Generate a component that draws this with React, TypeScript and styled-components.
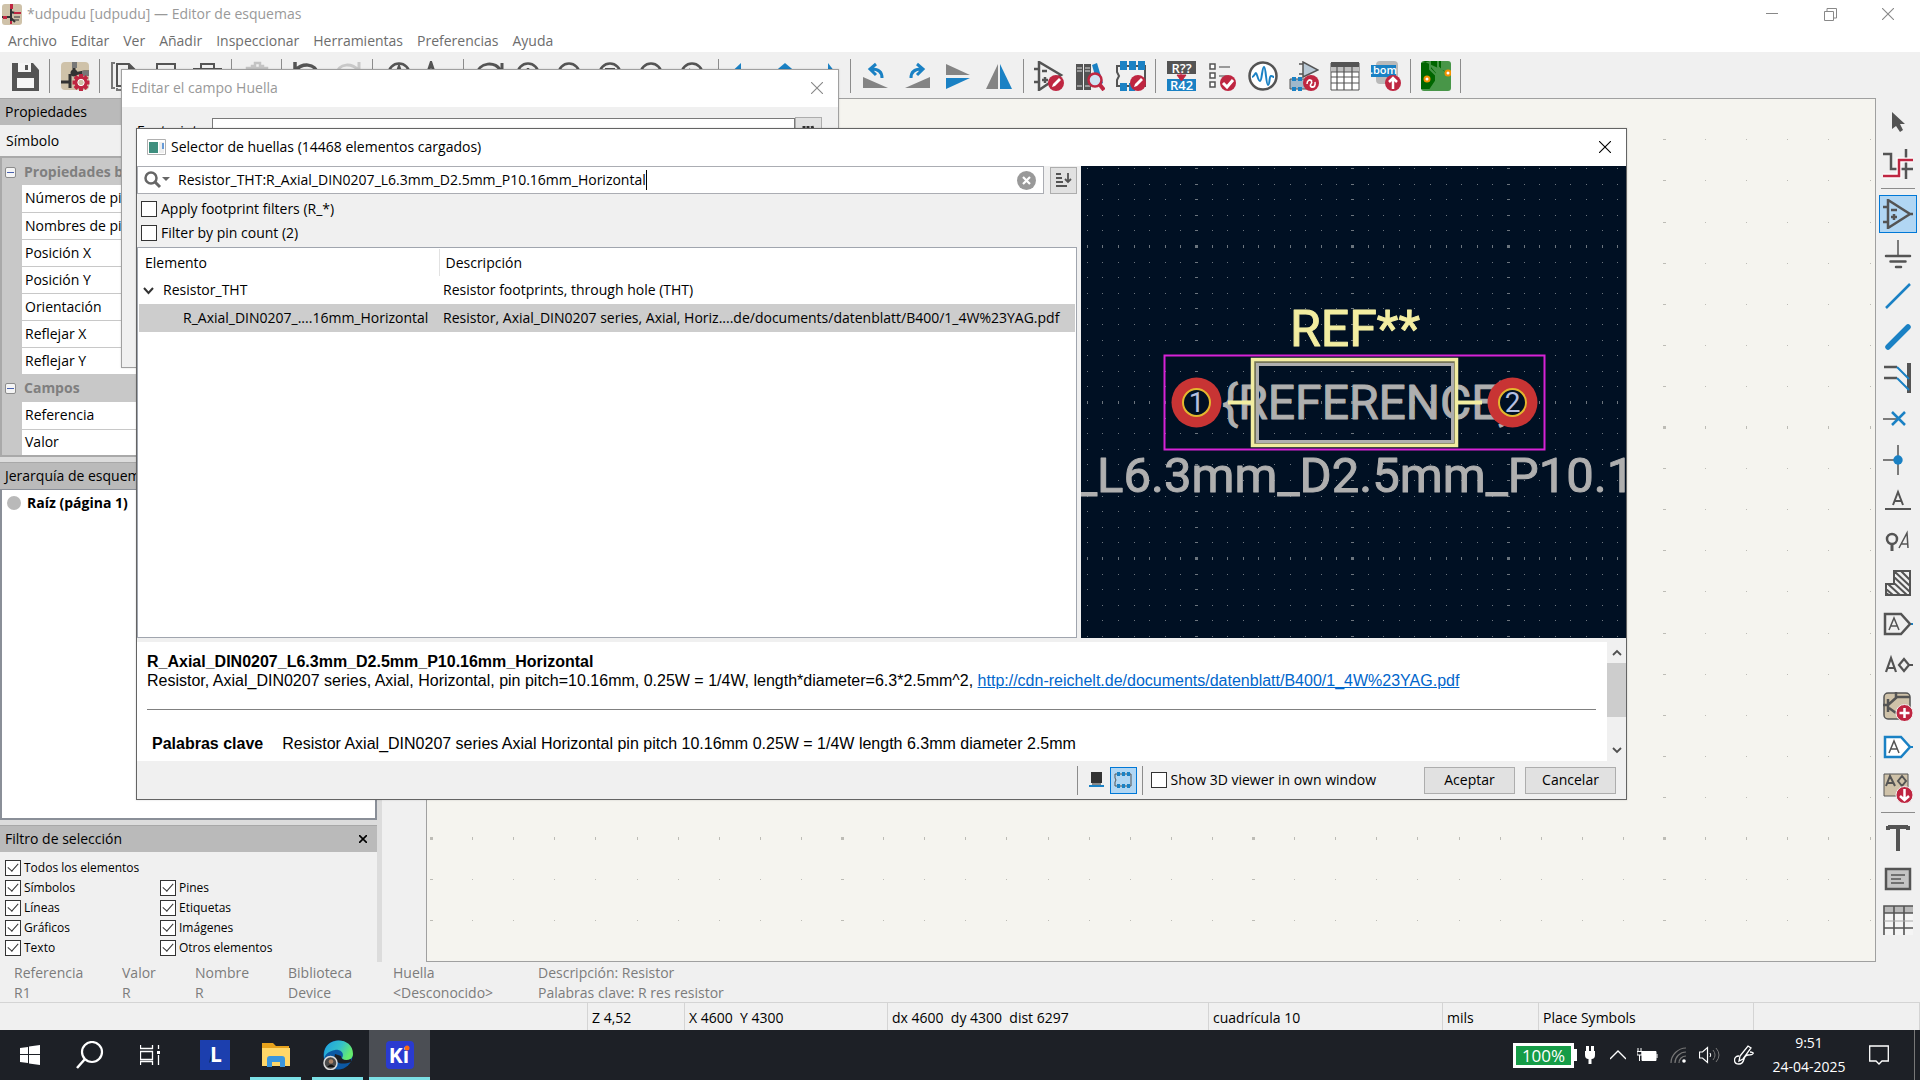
import React from "react";
import styled, { createGlobalStyle, css } from "styled-components";

const ink = "#545454";
const blue = "#1a81c4";
const red = "#bf2641";
const tan = "#cfc2a9";
const face = "#f0f0f0";
const ui = `"Open Sans", "Noto Sans", sans-serif`;

const Global = createGlobalStyle`
  *, *::before, *::after { box-sizing: border-box; }
  body { margin: 0; background: ${face}; overflow: hidden; }
  button, input { font: inherit; color: inherit; }
  h1, h2, h3, p { margin: 0; font-size: inherit; font-weight: inherit; }
`;

const Desktop = styled.div`
  position: relative;
  display: flex;
  flex-direction: column;
  height: 100vh;
  font: 14px/20px ${ui};
  color: #000;
  background: ${face};
`;

/* ---------- window frame ---------- */
const TitleBar = styled.header`
  display: flex;
  align-items: center;
  height: 30px;
  padding: 0 3px 2px 2px;
  background: #fff;
  color: #999;
  flex: none;
`;
const TitleText = styled.h1`
  flex: 1;
  padding-left: 5px;
`;
const FrameButton = styled.button<{ $w?: number }>`
  width: ${(p) => p.$w ?? 58}px;
  height: 28px;
  padding: 0;
  border: 0;
  background: none;
  display: grid;
  place-items: center;
`;
const MenuBar = styled.nav`
  display: flex;
  gap: 14px;
  height: 22px;
  padding: 0 8px;
  background: #fff;
  flex: none;
`;
const MenuItem = styled.button`
  padding: 0;
  border: 0;
  background: none;
  color: #6d6d6d;
  line-height: 22px;
`;

/* ---------- tool bars ---------- */
const ToolBar = styled.div<{ $vertical?: boolean }>`
  display: flex;
  flex: none;
  gap: 3px;
  background: ${face};
  ${(p) =>
    p.$vertical
      ? css`
          flex-direction: column;
          align-items: center;
          width: 44px;
          padding-top: 6px;
        `
      : css`
          height: 46px;
          align-items: center;
          padding: 2px 6px 0;
        `}
`;
const ToolButton = styled.button<{ $on?: boolean }>`
  width: 38px;
  height: 38px;
  flex: none;
  padding: 0;
  display: grid;
  place-items: center;
  border: 1px solid ${(p) => (p.$on ? "#0078d7" : "transparent")};
  background: ${(p) => (p.$on ? "#b1d6f3" : "none")};
`;
const ToolSep = styled.span<{ $vertical?: boolean }>`
  flex: none;
  background: #8c8c8c;
  ${(p) =>
    p.$vertical
      ? css`
          width: 34px;
          height: 1px;
          margin: 2px 0 3px;
        `
      : css`
          width: 1px;
          height: 34px;
          margin: 0 3px 0 2px;
        `}
`;

/* ---------- work area ---------- */
const Work = styled.main`
  display: flex;
  flex: 1;
  min-height: 0;
`;
const Sidebar = styled.aside`
  display: flex;
  flex-direction: column;
  width: 377px;
  flex: none;
  background: #dcdcdc;
  gap: 5px;
`;
const Pane = styled.section<{ $grow?: boolean }>`
  display: flex;
  flex-direction: column;
  background: ${face};
  ${(p) => p.$grow && "flex: 1;"}
`;
const PaneHead = styled.h2`
  display: flex;
  align-items: center;
  justify-content: space-between;
  height: 27px;
  padding: 0 5px;
  background: #bababa;
  border-top: 1px solid #a8a8a8;
`;
const PaneClose = styled.button`
  width: 18px;
  height: 18px;
  padding: 0;
  border: 0;
  background: none;
  display: grid;
  place-items: center;
`;
const PropTitle = styled.p`
  padding: 6px 6px 5px;
`;
const PropTable = styled.table`
  width: 100%;
  border-collapse: collapse;
  table-layout: fixed;
  border: 2px solid #a9a9a9;
  background: #fff;
`;
const PropGutter = styled.col`
  width: 21px;
`;
const PropCat = styled.th`
  height: 28px;
  padding: 0 0 0 3px;
  background: #c8c8c8;
  color: #7f7f7f;
  text-align: left;
  font-weight: 700;
`;
const CatToggle = styled.button`
  width: 11px;
  height: 11px;
  margin: 0 8px 0 0;
  padding: 0;
  border: 1px solid #8c8c8c;
  border-radius: 2px;
  background: linear-gradient(#4a62b0, #4a62b0) center / 7px 1px no-repeat #f4f4f4;
`;
const PropGap = styled.td`
  padding: 0;
  background: #c8c8c8;
`;
const PropName = styled.td`
  height: 27px;
  padding: 0 3px;
  border-bottom: 1px solid #c8c8c8;
`;
const Tree = styled.ul`
  flex: 1;
  margin: 0;
  padding: 3px 5px;
  list-style: none;
  background: #fff;
  border: 2px solid #8a8f98;
  border-top-width: 1px;
`;
const TreeNode = styled.li`
  display: flex;
  align-items: center;
  gap: 6px;
  font-weight: 700;
`;
const Bullet = styled.span`
  width: 14px;
  height: 14px;
  border-radius: 50%;
  background: #b9b9b9;
`;
const FilterGrid = styled.div`
  display: grid;
  grid-template-columns: 155px 1fr;
  padding: 6px 5px 4px;
  font-size: 12px;
`;
const CheckLabel = styled.label<{ $wide?: boolean; $gap?: number }>`
  display: flex;
  align-items: center;
  gap: ${(p) => p.$gap ?? 3}px;
  white-space: nowrap;
  ${(p) => p.$wide && "grid-column: 1 / -1;"}
`;
const Check = styled.input`
  appearance: none;
  width: 16px;
  height: 16px;
  margin: 0;
  flex: none;
  border: 1px solid #333;
  background: #fff;
  &:checked::before {
    content: "";
    display: block;
    width: 6px;
    height: 10px;
    margin: 0 0 0 4px;
    border: solid #333;
    border-width: 0 1px 1px 0;
    transform: rotate(42deg);
  }
`;
const Sash = styled.div`
  width: 5px;
  flex: none;
  background: #dcdcdc;
`;
const Gutter = styled.div`
  width: 44px;
  flex: none;
`;
const Sheet = styled.div`
  flex: 1;
  min-width: 0;
  border: 1px solid #a0a0a0;
  background: #f5f4ef;
`;
const Fill = styled.svg`
  display: block;
  width: 100%;
  height: 100%;
`;

/* ---------- message panel and status bar ---------- */
const MsgPanel = styled.dl`
  display: flex;
  flex: none;
  height: 41px;
  margin: 0;
  padding: 1px 14px 0;
  color: #7c7c7c;
  border-bottom: 1px solid #d4d4d4;
`;
const MsgItem = styled.div<{ $w: number }>`
  width: ${(p) => p.$w}px;
  white-space: nowrap;
`;
const MsgLine = styled.dt``;
const MsgValue = styled.dd`
  margin: 0;
`;
const StatusBar = styled.footer`
  display: flex;
  flex: none;
  height: 27px;
`;
const StatusCell = styled.span<{ $w?: number }>`
  ${(p) => (p.$w ? `width: ${p.$w}px;` : "flex: 1;")}
  padding-left: 4px;
  line-height: 29px;
  white-space: pre;
  border-right: 1px solid #d4d4d4;
`;

/* ---------- task bar ---------- */
const TaskBar = styled.footer`
  display: flex;
  flex: none;
  height: 50px;
  background: #1d2026;
  color: #fff;
`;
const TaskButton = styled.button<{ $w: number; $run?: boolean; $active?: boolean }>`
  width: ${(p) => p.$w}px;
  padding: 0;
  border: 0;
  border-bottom: 3px solid ${(p) => (p.$run || p.$active ? "#7ce0e6" : "transparent")};
  border-top: 3px solid transparent;
  background: ${(p) => (p.$active ? "#4b4e54" : "none")};
  margin-right: ${(p) => (p.$run ? 11 : 0)}px;
  display: grid;
  place-items: center;
  ${(p) => p.$active && "margin-left: -5px; border-top-color: #4b4e54;"}
`;
const Tray = styled.div`
  display: flex;
  align-items: center;
  margin-left: auto;
`;
const TrayIcon = styled.button<{ $w: number }>`
  width: ${(p) => p.$w}px;
  height: 50px;
  padding: 0;
  border: 0;
  background: none;
  display: grid;
  place-items: center;
`;
const Battery = styled.span`
  display: flex;
  align-items: center;
  &::after {
    content: "";
    width: 3px;
    height: 12px;
    background: #fff;
  }
`;
const BatteryLevel = styled.span`
  width: 61px;
  height: 25px;
  border: 3px solid #fff;
  background: #169c47;
  font-size: 17px;
  line-height: 19px;
  text-align: center;
`;
const Clock = styled.time`
  width: 90px;
  line-height: 24px;
  text-align: center;
  white-space: pre-line;
`;
const PeekLine = styled.span`
  width: 1px;
  height: 50px;
  margin: 0 5px 0 10px;
  background: #777;
`;

/* ---------- dialogs ---------- */
const Dialog = styled.section<{ $x: number; $y: number; $w: number; $h: number; $edge: string }>`
  position: absolute;
  left: ${(p) => p.$x}px;
  top: ${(p) => p.$y}px;
  width: ${(p) => p.$w}px;
  height: ${(p) => p.$h}px;
  display: flex;
  flex-direction: column;
  border: 1px solid ${(p) => p.$edge};
  background: ${face};
  box-shadow: 0 0 2px rgba(0, 0, 0, 0.15);
`;
const DialogTitle = styled.header<{ $dim?: boolean }>`
  display: flex;
  align-items: center;
  height: 37px;
  flex: none;
  padding: 0 0 1px ${(p) => (p.$dim ? 4 : 10)}px;
  background: #fff;
  color: ${(p) => (p.$dim ? "#999" : "#000")};
`;
const FieldRow = styled.div`
  display: flex;
  align-items: center;
  padding: 10px 16px 0 15px;
`;
const FieldLabel = styled.label`
  width: 75px;
`;
const FieldInput = styled.input`
  flex: 1;
  height: 26px;
  border: 1px solid #7a7a7a;
  background: #fff;
`;
const SmallButton = styled.button<{ $on?: boolean }>`
  width: 27px;
  height: 27px;
  flex: none;
  padding: 0;
  display: grid;
  place-items: center;
  border: 1px solid ${(p) => (p.$on ? "#0078d7" : "#adadad")};
  background: ${(p) => (p.$on ? "#b1d6f3" : "#e1e1e1")};
`;
const FlatButton = styled(SmallButton)`
  border-color: transparent;
  background: none;
`;
const Chooser = styled.div`
  display: flex;
  flex: none;
  height: 472px;
`;
const ChooserLeft = styled.div`
  display: flex;
  flex-direction: column;
  width: 940px;
  flex: none;
`;
const SearchRow = styled.div`
  display: flex;
  gap: 6px;
  align-items: center;
`;
const SearchBox = styled.div`
  display: flex;
  align-items: center;
  flex: 1;
  height: 28px;
  padding: 0 7px 0 6px;
  border: 1px solid #abadb3;
  background: #fff;
`;
const SearchInput = styled.input`
  field-sizing: content;
  margin-left: 7px;
  padding: 0;
  border: 0;
  outline: 0;
  background: none;
`;
const Caret = styled.span`
  width: 1px;
  height: 20px;
  background: #000;
`;
const ClearButton = styled.button`
  margin-left: auto;
  padding: 0;
  border: 0;
  background: none;
  display: grid;
`;
const Filters = styled.div`
  display: grid;
  gap: 4px;
  padding: 5px 4px 4px;
`;
const ResultBox = styled.div`
  flex: 1;
  padding: 1px;
  border: 1px solid #a0a5ae;
  background: #fff;
`;
const Results = styled.table`
  width: 100%;
  table-layout: fixed;
  border-collapse: collapse;
  white-space: nowrap;
`;
const Col = styled.col<{ $w?: number }>`
  ${(p) => p.$w && `width: ${p.$w}px;`}
`;
const HeadCell = styled.th`
  height: 27px;
  padding: 0 6px;
  text-align: left;
  font-weight: 400;
  & + & {
    border-left: 1px solid #e2e2e2;
  }
`;
const ResultRow = styled.tr<{ $on?: boolean }>`
  height: 28px;
  background: ${(p) => (p.$on ? "#cdcdcd" : "none")};
`;
const ResultCell = styled.td<{ $indent?: number }>`
  padding: 0 0 0 ${(p) => p.$indent ?? 4}px;
`;
const Expander = styled.span`
  display: inline-block;
  width: 20px;
`;
const Preview = styled.div`
  flex: 1;
  min-width: 0;
  margin-left: 4px;
  background: #001023;
`;
const Details = styled.div`
  display: flex;
  flex: none;
  height: 119px;
  margin-top: 4px;
  background: #fff;
`;
const DetailsBody = styled.article`
  flex: 1;
  padding: 10px 11px 0 10px;
  font: 16px/19px "Liberation Sans", Arial, sans-serif;
`;
const DetailsName = styled.h3`
  font-weight: 700;
`;
const DetailsLink = styled.a`
  color: #0066cc;
`;
const Rule = styled.hr`
  height: 1px;
  margin: 19px 0 24px;
  border: 0;
  background: #808080;
`;
const Keywords = styled.p`
  display: flex;
  gap: 19px;
  padding-left: 5px;
`;
const ScrollTrack = styled.div`
  display: flex;
  flex-direction: column;
  width: 19px;
  align-items: center;
  background: ${face};
`;
const ScrollArrow = styled.button`
  width: 19px;
  height: 21px;
  padding: 0;
  border: 0;
  background: none;
  display: grid;
  place-items: center;
`;
const ScrollThumb = styled.span`
  width: 19px;
  height: 54px;
  margin-bottom: auto;
  background: #cdcdcd;
`;
const DialogFooter = styled.footer`
  display: flex;
  align-items: center;
  justify-content: flex-end;
  flex: 1;
  padding-right: 10px;
`;
const FooterSep = styled.span`
  width: 1px;
  height: 29px;
  margin: 0 5px 0 5px;
  background: #8c8c8c;
`;
const FooterCheck = styled(CheckLabel)`
  margin: 0 38px 0 3px;
`;
const DialogButton = styled.button`
  width: 91px;
  height: 27px;
  margin-left: 10px;
  padding: 0;
  border: 1px solid #adadad;
  background: #e1e1e1;
  line-height: 20px;
`;

/* ---------- icons (30 unit grid) ---------- */
const shapes: Record<string, React.ReactNode> = {
  save: (
    <>
      <path d="M2 2h21l6 7v21H2z" fill={ink} />
      <path d="M8 2h13v9H8z" fill="#f5f5f5" />
      <path d="M15 4h3v5h-3z" fill={ink} />
      <path d="M7 17h17v10H7z" fill="#f5f5f5" />
    </>
  ),
  setup: (
    <>
      <rect x="1" y="1" width="28" height="28" rx="4" fill={tan} />
      <path d="M14 1v12M1 21h9M10 13v14M14 13l10 -2h5" stroke="#333" strokeWidth="3" fill="none" />
      <path d="M12 1h5v6h-5zM22 10h7v5h-7z" fill="#777" />
      <circle cx="14" cy="12" r="3.500" fill="#333" />
      <g stroke={red} strokeWidth="4">
        <path d="M21 13v17M12.500 21.500h17M15 15.500l12 12M27 15.500l-12 12" />
      </g>
      <circle cx="21" cy="21.500" r="6.500" fill={red} />
      <circle cx="21" cy="21.500" r="3.200" fill={tan} stroke="#fff" />
    </>
  ),
  page: (
    <>
      <path d="M2 2v25M1 2h4M1 27h4M7 29h16M7 27v3" stroke="#777" strokeWidth="2" fill="none" />
      <path d="M7 3h12l6 6v16H7z" fill="none" stroke={ink} strokeWidth="2" />
      <path d="M18 2l8 8h-8z" fill={ink} />
    </>
  ),
  print: (
    <path d="M6 9V3h18v6M3 9h25v13H3zM7 22v6h17v-6" fill="none" stroke={ink} strokeWidth="2" />
  ),
  plot: (
    <>
      <path d="M1 7h29v14H1zM5 21h20v7H5z" fill={ink} />
      <path d="M9 7V3h13v4" fill="none" stroke={ink} strokeWidth="2" />
    </>
  ),
  paste: (
    <path d="M5 7h20v21H5zM10 9V5h3V2h5v3h3v4z" fill="none" stroke="#c4c4c4" strokeWidth="2.500" />
  ),
  undo: <path d="M3 1v9h10M3 10c5-8 22-9 22 4c0 6-4 10-9 11" fill="none" stroke={ink} strokeWidth="3.500" />,
  redo: <path d="M26 1v9H17M26 10C21 2 4 1 4 14c0 6 4 10 10 11" fill="none" stroke="#c8c8c8" strokeWidth="3" />,
  find: (
    <>
      <circle cx="16" cy="13" r="10.500" fill="none" stroke={ink} strokeWidth="2.500" />
      <path d="M13 15l3-9 3 9M23 20l6 8" fill="none" stroke={ink} strokeWidth="3" />
    </>
  ),
  replace: <path d="M2 17L7 2l5 15M4 12h7" fill="none" stroke={ink} strokeWidth="3" />,
  refresh: <path d="M3 15C3 0 24 0 26 10M28 2v9h-9" fill="none" stroke={ink} strokeWidth="3" />,
  zoomIn: (
    <>
      <circle cx="13" cy="13" r="10.500" fill="none" stroke={ink} strokeWidth="2.500" />
      <path d="M13 7v12M7 13h12M21 20l7 8" stroke={ink} strokeWidth="2.500" />
    </>
  ),
  zoomOut: (
    <>
      <circle cx="13" cy="13" r="10.500" fill="none" stroke={ink} strokeWidth="2.500" />
      <path d="M7 13h12M21 20l7 8" stroke={ink} strokeWidth="2.500" />
    </>
  ),
  zoomFit: (
    <>
      <circle cx="13" cy="13" r="10.500" fill="none" stroke={ink} strokeWidth="2.500" />
      <path d="M9 8h8v10H9zM21 20l7 8" fill="#999" stroke={ink} strokeWidth="2" />
    </>
  ),
  zoomObjects: (
    <>
      <circle cx="13" cy="13" r="10.500" fill="none" stroke={ink} strokeWidth="2.500" />
      <path d="M14 9h4v5M21 20l7 8" fill="none" stroke="#777" strokeWidth="2" />
    </>
  ),
  zoomArea: (
    <>
      <circle cx="13" cy="13" r="10.500" fill="none" stroke={ink} strokeWidth="2.500" />
      <path d="M10 7v10l8-5zM21 20l7 8" fill="#999" />
    </>
  ),
  back: <path d="M12 2v26L-2 15z" fill={blue} />,
  up: <path d="M15 2l13 11H2z" fill={blue} />,
  forward: <path d="M17 2v26l10-13z" fill={blue} />,
  rotateLeft: (
    <>
      <path d="M2 16l25 11H2z" fill="#848484" />
      <path d="M21 17c0-6-3-9-10-9M15 3l-6 5 6 6" fill="none" stroke={blue} strokeWidth="3" />
    </>
  ),
  rotateRight: (
    <>
      <path d="M28 16L3 27h25z" fill="#848484" />
      <path d="M9 17c0-6 3-9 10-9M15 3l6 5-6 6" fill="none" stroke={blue} strokeWidth="3" />
    </>
  ),
  mirrorV: (
    <>
      <path d="M3 3l24 11H3z" fill="#848484" />
      <path d="M3 28l24-11H3z" fill={blue} />
    </>
  ),
  mirrorH: (
    <>
      <path d="M14 3v25H2z" fill="#848484" />
      <path d="M16 3v25h12z" fill={blue} />
    </>
  ),
  symbolEdit: (
    <>
      <path d="M5 1v28L27 14zM0 8h5M0 21h5M8 10h5M8 19h6M11 16v6" fill="none" stroke={ink} strokeWidth="2.500" />
      <circle cx="22" cy="22" r="8" fill={red} />
      <path d="M18 26l1-3 6-6 2 2-6 6z" fill="#fff" />
    </>
  ),
  libBrowse: (
    <>
      <path d="M1 3h7v26H1zM9 3h7v26H9z" fill={ink} />
      <path d="M2 7h5M2 10h5M10 7h5M10 10h5M2 25h5M10 25h5" stroke="#ddd" />
      <path d="M17 4l5-2 6 20-5 3z" fill={blue} />
      <circle cx="20" cy="19" r="6.500" fill="#cfe3f2" stroke={red} strokeWidth="2.500" />
      <path d="M25 24l4 5" stroke={red} strokeWidth="4" />
    </>
  ),
  footprintEdit: (
    <>
      <path d="M1 5h28v20H1v-6l2-4-2-4z" fill="none" stroke={ink} strokeWidth="2" />
      <path d="M4 0h7v9H4zM13 0h7v9h-7zM22 0h7v9h-7zM4 22h7v8H4zM13 22h6v8h-6z" fill={blue} />
      <circle cx="22" cy="22" r="8" fill={red} />
      <path d="M18 26l1-3 6-6 2 2-6 6z" fill="#fff" />
    </>
  ),
  annotate: (
    <>
      <path d="M1 0h29v13H1z" fill={ink} />
      <path d="M1 18h29v12H1z" fill={blue} />
      <path d="M15 11v5M11 14l4.500 6 4.500-6z" fill={red} stroke={red} />
      <g fill="#fff" fontFamily="Open Sans" fontWeight="600" fontSize="13" textAnchor="middle">
        <text x="15.500" y="12">R??</text>
        <text x="15.500" y="29">R42</text>
      </g>
    </>
  ),
  erc: (
    <>
      <path d="M3 3h5v5H3zM3 12h5v5H3zM3 21h5v5H3z" fill="#fff" stroke={ink} strokeWidth="1.500" />
      <path d="M12 6h11M12 15h8" stroke="#999" strokeWidth="2" />
      <circle cx="21" cy="22" r="8" fill={red} />
      <path d="M16 22l4 4 6-7" fill="none" stroke="#fff" strokeWidth="3" />
    </>
  ),
  simulate: (
    <>
      <circle cx="15" cy="15" r="13.500" fill="#fff" stroke={ink} strokeWidth="2.500" />
      <path d="M4 16c2 0 3-4 4-4s2 8 4 8 2-14 4-14 2 18 4 18 1-9 3-9 2 1 3 1" fill="none" stroke={blue} strokeWidth="2" />
    </>
  ),
  assign: (
    <>
      <path d="M14 1v15l15-7zM10 3h4M10 13h4" fill="#b9c9d6" stroke={ink} strokeWidth="1.500" />
      <path d="M1 18h17v10H1z" fill="#9fb8cb" stroke={ink} />
      <path d="M3 16h4v4H3zM9 16h4v4H9zM3 26h4v4H3zM9 26h4v4H9z" fill={blue} />
      <circle cx="22" cy="22" r="8" fill={red} />
      <path d="M19 20c2-3 5 1 3 3s1 5 4 2M18 23c0-4 3-5 5-3M26 21c1 4-2 6-4 4" fill="none" stroke="#fff" strokeWidth="1.500" />
    </>
  ),
  fields: (
    <>
      <path d="M1 2h28v27H1z" fill="#fff" stroke={ink} />
      <path d="M1 1h28v5H1z" fill={ink} />
      <path d="M1 6h28v5H1z" fill="#c0c0c0" />
      <path d="M1 11h28M1 16h28M1 22h28M7 6v23M14 6v23M22 6v23" stroke={ink} strokeWidth="1.200" />
    </>
  ),
  bom: (
    <>
      <rect x="5" y="0" width="22" height="23" rx="4" fill="#b9b9b9" />
      <path d="M0 4h25v12H0z" fill={blue} />
      <text x="12.500" y="13" fill="#fff" fontFamily="Open Sans" fontWeight="600" fontSize="11" textAnchor="middle">.bom</text>
      <circle cx="22" cy="22" r="8" fill={red} />
      <path d="M22 28V17M18 21l4-4 4 4" fill="none" stroke="#fff" strokeWidth="2.500" />
    </>
  ),
  pcb: (
    <>
      <rect width="30" height="30" rx="3" fill="#489648" />
      <path d="M2 0h18v9l10 4M0 2v26h9l6-8v-8L10 6V0z" fill="#006600" />
      <path d="M9 0v8l6 6v6l-6 9M17 0v6l6 6h6M5 18h4" fill="none" stroke="#489648" strokeWidth="2" />
      <circle cx="6" cy="18" r="2.500" fill="#fff" stroke="#f29100" strokeWidth="2" />
      <circle cx="27" cy="12" r="2.500" fill="#fff" stroke="#f29100" strokeWidth="2" />
    </>
  ),
  select: <path d="M9 4v17l4-3 4 6 3-2-3-6h5z" fill={ink} />,
  highlight: (
    <>
      <path d="M0 5h8v15h22M23 0v30" fill="none" stroke={ink} strokeWidth="2.500" />
      <path d="M0 27h16V11h14" fill="none" stroke="#fff" strokeWidth="5" />
      <path d="M0 27h16V11h14" fill="none" stroke={red} strokeWidth="2.500" />
    </>
  ),
  symbol: (
    <path d="M5 1v28L27 15zM0 8h5M0 23h5M27 15h3M8 11h6M8 18h6M11 15v6" fill="none" stroke={ink} strokeWidth="2.500" />
  ),
  power: (
    <>
      <path d="M15 0v15" stroke={ink} strokeWidth="1.500" />
      <path d="M3 16h24M7.500 21.500h15M13 27h5" fill="none" stroke={ink} strokeWidth="2.500" strokeLinecap="round" />
    </>
  ),
  wire: <path d="M3 27L27 3" stroke={blue} strokeWidth="2.500" />,
  bus: <path d="M5 25L25 5" stroke={blue} strokeWidth="5.500" strokeLinecap="round" />,
  busEntry: (
    <>
      <path d="M1 4h13M1 15h13M26 0v30" stroke={ink} strokeWidth="2.500" />
      <path d="M26 0v30" stroke={ink} strokeWidth="4" />
      <path d="M14 4l12 12M14 15l12 12" stroke={blue} strokeWidth="2" />
    </>
  ),
  noConnect: (
    <>
      <path d="M0 15h15" stroke={ink} strokeWidth="1.500" />
      <path d="M9 8l13 13M22 8L9 21" stroke={blue} strokeWidth="2.500" />
    </>
  ),
  junction: (
    <>
      <path d="M0 15h15M15 0v30" stroke={ink} strokeWidth="1.500" />
      <circle cx="15" cy="15" r="4.700" fill={blue} />
    </>
  ),
  label: <path d="M2 23h26M10 19l5-13 5 13M12 15h6" fill="none" stroke={ink} strokeWidth="2" />,
  netClass: (
    <>
      <circle cx="9" cy="12" r="5" fill="none" stroke={ink} strokeWidth="2.500" />
      <path d="M9 17v7" stroke={ink} strokeWidth="3" />
      <path d="M16 21l8-15 1 15M18 17h7" fill="none" stroke={ink} strokeWidth="1.500" />
    </>
  ),
  ruleArea: (
    <path d="M11 3h16v24H3V16h8zM11 3l16 15M11 9l16 15M11 15l13 12M5 16l12 11M3 21l7 6M18 3l9 9M3 25l3 2" fill="none" stroke={ink} strokeWidth="2" />
  ),
  globalLabel: (
    <>
      <path d="M27 15h3" stroke={blue} strokeWidth="2" />
      <path d="M2 5h16l9 10-9 10H2z" fill="none" stroke={ink} strokeWidth="2.500" />
      <path d="M6 21l5-12 5 12M8 17h6" fill="none" stroke={ink} strokeWidth="1.500" />
    </>
  ),
  hierLabel: (
    <path d="M3 22L8 8l5 14M5 18h7M21 9l-5 6 5 6 5-6zM26 15h4" fill="none" stroke={ink} strokeWidth="2.200" />
  ),
  sheet: (
    <>
      <rect x="1" y="2" width="26" height="26" rx="4" fill={tan} stroke={ink} strokeWidth="1.500" />
      <path d="M13 1v5h14M0 14h5M5 8v13M5 14l9-8M6 17l7 5" fill="none" stroke={ink} strokeWidth="2.500" />
      <circle cx="21.500" cy="22" r="8.500" fill={red} stroke={face} />
      <path d="M21.500 17v10M16.500 22h10" stroke="#fff" strokeWidth="2.500" />
    </>
  ),
  sheetPin: (
    <>
      <path d="M2 5h16l9 10-9 10H2z" fill="#fff" stroke={blue} strokeWidth="2.500" />
      <path d="M27 15h3" stroke={blue} strokeWidth="2" />
      <path d="M6 21l5-12 5 12M8 17h6" fill="none" stroke={ink} strokeWidth="1.500" />
    </>
  ),
  importPins: (
    <>
      <path d="M1 1h24v22H1z" fill={tan} stroke={ink} />
      <path d="M3 13L7 3l5 10M5 10h6M19 3l-4 5 4 5 4-5z" fill="none" stroke={ink} strokeWidth="2" />
      <circle cx="21.500" cy="22" r="8.500" fill={red} stroke={face} />
      <path d="M21.500 16v11M17 23l4.500 4 4.500-4" fill="none" stroke="#fff" strokeWidth="2.500" />
    </>
  ),
  text: <path d="M5 4h20M15 4v24M5 3v4M25 3v4" stroke={ink} strokeWidth="4" />,
  textBox: (
    <>
      <path d="M3 5h24v20H3z" fill="#c4c4c4" stroke={ink} strokeWidth="2.500" />
      <path d="M8 11h14M8 15h10M8 19h13" stroke={ink} strokeWidth="1.500" />
    </>
  ),
  table: (
    <>
      <path d="M1 1h29v29H1z" fill="#f5f5f5" />
      <path d="M1 1h29v7H1z" fill="#b9b9b9" />
      <path d="M1 30V1h29M1 8h29M1 23h29M11 1v29M21 1v29" fill="none" stroke={ink} strokeWidth="1.600" />
      <path d="M1 16h29" stroke="#aaa" />
    </>
  ),
};

const Icon = ({ name }: { name: string }) => (
  <svg width="30" height="30" viewBox="0 0 30 30" aria-hidden="true">
    {shapes[name]}
  </svg>
);

const Cross = ({ size, color }: { size: number; color: string }) => (
  <svg width={size} height={size} viewBox="0 0 12 12" aria-hidden="true">
    <path d="M0 0l12 12M12 0L0 12" stroke={color} strokeWidth="1.100" />
  </svg>
);

const topTools = [
  "save", "|", "setup", "|", "page", "print", "plot", "|", "paste", "|", "undo", "redo", "|",
  "find", "replace", "|", "refresh", "zoomIn", "zoomOut", "zoomFit", "zoomObjects", "zoomArea", "|",
  "back", "up", "forward", "|", "rotateLeft", "rotateRight", "mirrorV", "mirrorH", "|",
  "symbolEdit", "libBrowse", "footprintEdit", "|", "annotate", "erc", "simulate", "assign",
  "fields", "bom", "|", "pcb", "|",
];
const sideTools = [
  "select", "highlight", "|", "symbol", "power", "wire", "bus", "busEntry", "noConnect",
  "junction", "label", "netClass", "ruleArea", "globalLabel", "hierLabel", "sheet", "sheetPin",
  "importPins", "|", "text", "textBox", "table",
];

const Tools = ({ items, vertical }: { items: string[]; vertical?: boolean }) => (
  <ToolBar $vertical={vertical}>
    {items.map((n, i) =>
      n === "|" ? (
        <ToolSep key={i} $vertical={vertical} />
      ) : (
        <ToolButton key={i} aria-label={n} $on={n === "symbol"}>
          <Icon name={n} />
        </ToolButton>
      ),
    )}
  </ToolBar>
);

/* One major grid cell holds ten minor steps; the first row and column are drawn longer. */
const DotGrid = ({ id, x, y, size, color }: { id: string; x: number; y: number; size: number; color: string }) => {
  const steps = Array.from({ length: 10 }, (_, i) => Math.round((i * size) / 10));
  return (
    <pattern id={id} x={x - 1} y={y - 1} width={size} height={size} patternUnits="userSpaceOnUse">
      {steps.map((cx, i) =>
        steps.map((cy, j) => (
          <rect
            key={`${i}-${j}`}
            x={i === 0 ? 0 : cx + 1}
            y={j === 0 ? 0 : cy + 1}
            width={i === 0 ? 3 : 1}
            height={j === 0 ? 3 : 1}
            fill={color}
          />
        )),
      )}
    </pattern>
  );
};

const FootprintPreview = () => (
  <Fill viewBox="1081 166 545 472" preserveAspectRatio="xMinYMin slice">
    <DotGrid id="fp-grid" x={1196} y={402} size={156} color="#6c757e" />
    <rect x="1081" y="166" width="545" height="472" fill="url(#fp-grid)" />
    <g fill="#afafaf" stroke="#afafaf" strokeWidth="1" strokeLinejoin="round" fontFamily="Roboto, sans-serif" fontSize="48">
      <text x="1222" y="419">{"{REFERENCE}"}</text>
      <text x="1075" y="492" fontSize="49">_L6.3mm_D2.5mm_P10.16mm</text>
    </g>
    <rect x="1257" y="364" width="196" height="78" fill="none" stroke="#afafaf" strokeWidth="4" />
    <rect x="1255" y="362" width="200" height="82" fill="none" stroke="#75755a" strokeWidth="2" />
    <rect x="1252.500" y="359.500" width="204" height="86" fill="none" stroke="#f2eda1" strokeWidth="3.500" />
    <path d="M1228 402.500h24M1458 402.500h24" stroke="#f2eda1" strokeWidth="4" />
    <rect x="1164.500" y="355.500" width="380" height="94" fill="none" stroke="#d622d6" strokeWidth="2" />
    <text x="1290" y="346" fill="#f2eda1" stroke="#f2eda1" strokeWidth="1" strokeLinejoin="round" fontFamily="Roboto, sans-serif" fontSize="50">REF**</text>
    {[1196.5, 1512.5].map((cx, i) => (
      <g key={cx}>
        <circle cx={cx} cy="402.500" r="25" fill="#c83434" />
        <circle cx={cx} cy="402.500" r="13.500" fill="#001023" stroke="#e3b72e" strokeWidth="2" />
        <text x={cx} y="412" fill="#b5bfe0" fontFamily="Roboto, sans-serif" fontSize="28" textAnchor="middle">
          {i + 1}
        </text>
      </g>
    ))}
  </Fill>
);

const filterItems = [
  "Todos los elementos", "Símbolos", "Pines", "Líneas", "Etiquetas", "Gráficos", "Imágenes", "Texto", "Otros elementos",
];
const groups = [
  { name: "Propiedades básicas", rows: ["Números de pines", "Nombres de pines", "Posición X", "Posición Y", "Orientación", "Reflejar X", "Reflejar Y"] },
  { name: "Campos", rows: ["Referencia", "Valor"] },
];
const message: [string, string, number][] = [
  ["Referencia", "R1", 108],
  ["Valor", "R", 73],
  ["Nombre", "R", 93],
  ["Biblioteca", "Device", 105],
  ["Huella", "<Desconocido>", 145],
  ["Descripción: Resistor", "Palabras clave: R res resistor", 300],
];
const status: [string, number | undefined][] = [
  ["", 588], ["Z 4,52", 97], ["X 4600  Y 4300", 203], ["dx 4600  dy 4300  dist 6297", 321],
  ["cuadrícula 10", 234], ["mils", 96], ["Place Symbols", 215], ["", undefined],
];

export default function App() {
  const [query, setQuery] = React.useState("Resistor_THT:R_Axial_DIN0207_L6.3mm_D2.5mm_P10.16mm_Horizontal");
  return (
    <Desktop>
      <Global />
      <TitleBar>
        <svg width="20" height="21" viewBox="0 0 20 21" aria-hidden="true">
          <rect width="20" height="21" rx="3" fill={tan} />
          <path d="M9 0v19M0 13h8M9 8l4 1h6M9 14l4 4" stroke="#333" strokeWidth="2" fill="none" />
          <path d="M8 0h3v5H8zM12 8h7v2h-7zM1 12h4v3H1zM8 17h2v3H8z" fill={red} />
          <path d="M12 13h6M12 16h5" stroke="#333" />
        </svg>
        <TitleText>*udpudu [udpudu] — Editor de esquemas</TitleText>
        <FrameButton aria-label="Minimizar">
          <svg width="12" height="12"><path d="M0 5.500h12" stroke="#888" /></svg>
        </FrameButton>
        <FrameButton aria-label="Restaurar">
          <svg width="13" height="13"><path d="M.500 3.500h9v9h-9zM3 3V.500h9.500v9.500H10" fill="none" stroke="#888" /></svg>
        </FrameButton>
        <FrameButton aria-label="Cerrar"><Cross size={12} color="#888" /></FrameButton>
      </TitleBar>
      <MenuBar>
        {["Archivo", "Editar", "Ver", "Añadir", "Inspeccionar", "Herramientas", "Preferencias", "Ayuda"].map((m) => (
          <MenuItem key={m}>{m}</MenuItem>
        ))}
      </MenuBar>
      <Tools items={topTools} />

      <Work>
        <Sidebar>
          <Pane>
            <PaneHead>Propiedades</PaneHead>
            <PropTitle>Símbolo</PropTitle>
            <PropTable>
              <colgroup><PropGutter /><col /></colgroup>
              <tbody>
                {groups.map((g) => (
                  <React.Fragment key={g.name}>
                    <tr>
                      <PropCat colSpan={2}><CatToggle aria-label="Contraer" />{g.name}</PropCat>
                    </tr>
                    {g.rows.map((r) => (
                      <tr key={r}><PropGap /><PropName>{r}</PropName></tr>
                    ))}
                  </React.Fragment>
                ))}
              </tbody>
            </PropTable>
          </Pane>
          <Pane $grow>
            <PaneHead>Jerarquía de esquemas</PaneHead>
            <Tree><TreeNode><Bullet />Raíz (página 1)</TreeNode></Tree>
          </Pane>
          <Pane>
            <PaneHead>
              Filtro de selección
              <PaneClose aria-label="Cerrar panel">
                <svg width="8" height="8" viewBox="0 0 8 8"><path d="M0 0l8 8M8 0L0 8" stroke="#000" strokeWidth="1.600" /></svg>
              </PaneClose>
            </PaneHead>
            <FilterGrid>
              {filterItems.map((f, i) => (
                <CheckLabel key={f} $wide={i === 0}><Check type="checkbox" defaultChecked />{f}</CheckLabel>
              ))}
            </FilterGrid>
          </Pane>
        </Sidebar>
        <Sash />
        <Gutter />
        <Sheet>
          <Fill>
            <DotGrid id="sheet-grid" x={4} y={328} size={411} color="#bdbcb6" />
            <rect width="100%" height="100%" fill="url(#sheet-grid)" />
          </Fill>
        </Sheet>
        <Tools items={sideTools} vertical />
      </Work>

      <MsgPanel>
        {message.map(([k, v, w]) => (
          <MsgItem key={k} $w={w}><MsgLine>{k}</MsgLine><MsgValue>{v}</MsgValue></MsgItem>
        ))}
      </MsgPanel>
      <StatusBar>
        {status.map(([s, w], i) => <StatusCell key={i} $w={w}>{s}</StatusCell>)}
      </StatusBar>

      <TaskBar>
        <TaskButton $w={60} aria-label="Inicio">
          <svg width="20" height="20" viewBox="0 0 20 20"><path d="M0 3l8-1v7H0zM9 1.500L20 0v9H9zM0 10h8v8l-8-1zM9 10h11v10L9 18.500z" fill="#fff" /></svg>
        </TaskButton>
        <TaskButton $w={60} aria-label="Buscar">
          <svg width="30" height="28" viewBox="0 0 30 28"><circle cx="17" cy="11" r="10" fill="none" stroke="#fff" strokeWidth="2.200" /><path d="M10 18l-8 9" stroke="#fff" strokeWidth="2.500" /></svg>
        </TaskButton>
        <TaskButton $w={60} aria-label="Vista de tareas">
          <svg width="20" height="20" viewBox="0 0 20 20"><path d="M.500 0v3.500h12V0M.500 6.500h12v8H.500zM.500 20v-3.500h12V20M18.500 0v4M18.500 10v10" fill="none" stroke="#fff" strokeWidth="1.300" /><path d="M17 6h3v3h-3z" fill="#fff" /></svg>
        </TaskButton>
        <TaskButton $w={70} aria-label="L">
          <svg width="30" height="30" viewBox="0 0 30 30"><rect width="30" height="30" fill="#1c3fae" /><path d="M9 23l4-17v13z" fill="#0a2a55" /><text x="16" y="22" fill="#fff" fontFamily="Open Sans" fontSize="21" fontWeight="700" textAnchor="middle">L</text></svg>
        </TaskButton>
        <TaskButton $w={51} $run aria-label="Explorador">
          <svg width="28" height="24" viewBox="0 0 28 24"><path d="M0 0h11l3 3h13v19H0z" fill="#e7a21c" /><path d="M0 5h28v18H0z" fill="#ffd768" /><path d="M5 24v-8q0-3 3-3h12q3 0 3 3v8h-5v-5h-8v5z" fill="#3a96dd" /></svg>
        </TaskButton>
        <TaskButton $w={51} $run aria-label="Edge">
          <svg width="30" height="30" viewBox="0 0 30 30">
            <defs><linearGradient id="edge" x2="1" y2=".4"><stop stopColor="#1b9de2" /><stop offset=".6" stopColor="#35c1c8" /><stop offset="1" stopColor="#66eb6e" /></linearGradient></defs>
            <circle cx="15" cy="15" r="14.500" fill="#0c59a4" />
            <path d="M1 15C1-4 30-4 30 14c0 7-10 8-11 4 3-5-2-9-7-8C6 11 2 14 1 19z" fill="url(#edge)" />
            <path d="M12 14c-2 8 5 12 16 8V19c-5 2-10 1-10-3z" fill="#1d2026" />
            <circle cx="7.500" cy="23" r="6.500" fill="#4a4a4a" stroke="#d8d8d8" strokeWidth="1.500" />
            <circle cx="8" cy="21.500" r="2.300" fill="#a87f64" /><path d="M4 27q4-5 8 0z" fill="#111" />
          </svg>
        </TaskButton>
        <TaskButton $w={61} $active aria-label="KiCad">
          <svg width="28" height="28" viewBox="0 0 28 28"><rect width="28" height="28" rx="4" fill="#2a3bd0" /><text x="13" y="22" fill="#fff" fontFamily="Open Sans" fontSize="21" fontWeight="700" textAnchor="middle">Ki</text><circle cx="21" cy="7" r="2.500" fill="#ff6a13" /></svg>
        </TaskButton>
        <Tray>
          <Battery><BatteryLevel>100%</BatteryLevel></Battery>
          <TrayIcon $w={26} aria-label="Cargando"><svg width="12" height="18" viewBox="0 0 12 18"><path d="M2 0h3v5h2V0h3v5h1v4q0 4-3.500 4v5h-3v-5Q1 13 1 9V5h1z" fill="#fff" /></svg></TrayIcon>
          <TrayIcon $w={30} aria-label="Iconos ocultos"><svg width="16" height="10"><path d="M0 9l8-8 8 8" fill="none" stroke="#fff" strokeWidth="1.300" /></svg></TrayIcon>
          <TrayIcon $w={30} aria-label="Batería"><svg width="22" height="14" viewBox="0 0 22 14"><path d="M5 3.500h14v9H5zM20 6v4" fill="#fff" stroke="#fff" /><path d="M1 0v3M4 0v3M0 3.500h5M0 4v3h5V4M2.500 7v6" fill="none" stroke="#fff" /></svg></TrayIcon>
          <TrayIcon $w={31} aria-label="Red"><svg width="17" height="17" viewBox="0 0 17 17"><path d="M1 16C1 8 8 1 16 1M5 16c0-6 5-11 11-11M9 16c0-4 3-7 7-7" fill="none" stroke="#777" strokeWidth="1.200" /><circle cx="14" cy="14" r="1.800" fill="#fff" /></svg></TrayIcon>
          <TrayIcon $w={30} aria-label="Volumen"><svg width="21" height="18" viewBox="0 0 21 18"><path d="M.500 6h3l5-4.500v15l-5-4.500h-3z" fill="none" stroke="#fff" strokeWidth="1.200" /><path d="M11 7q1.500 2 0 4" stroke="#fff" fill="none" /><path d="M14 4q4 5 0 10M17 2q6 7 0 14" stroke="#777" fill="none" /></svg></TrayIcon>
          <TrayIcon $w={40} aria-label="Lápiz"><svg width="20" height="20" viewBox="0 0 20 20"><path d="M6 11L14 1l3 2-8 11-4 2zM5 11c-6 0-6 8 0 8 7 0 3-9 9-9 6 0 7-3 2-3" fill="none" stroke="#fff" strokeWidth="1.300" /></svg></TrayIcon>
          <Clock>{"9:51\n24-04-2025"}</Clock>
          <TrayIcon $w={50} aria-label="Notificaciones"><svg width="20" height="20" viewBox="0 0 20 20"><path d="M.700 1h18.600v15H13l-3 3-3-3H.700z" fill="none" stroke="#fff" strokeWidth="1.300" /></svg></TrayIcon>
          <PeekLine />
        </Tray>
      </TaskBar>

      <Dialog $x={121} $y={69} $w={718} $h={299} $edge="#a0a0a0">
        <DialogTitle $dim>
          <TitleText>Editar el campo Huella</TitleText>
          <FrameButton $w={42} aria-label="Cerrar"><Cross size={12} color="#888" /></FrameButton>
        </DialogTitle>
        <FieldRow>
          <FieldLabel htmlFor="fp">Footprint:</FieldLabel>
          <FieldInput id="fp" />
          <SmallButton aria-label="Biblioteca"><svg width="14" height="14"><path d="M2 2v12M6 2v12M10 2l3 12" stroke="#333" strokeWidth="3" /></svg></SmallButton>
        </FieldRow>
      </Dialog>

      <Dialog $x={136} $y={128} $w={1491} $h={672} $edge="#646464">
        <DialogTitle>
          <svg width="19" height="16" viewBox="0 0 19 16"><path d="M.500 .500h18v15H.500z" fill="#fff" stroke="#b0b0b0" /><path d="M2 3h9v11H2z" fill="#3e8e7e" /><path d="M12 3h5v11h-5z" fill="#eee" /><path d="M16 4v6" stroke="#3a7fd0" strokeWidth="1.500" /></svg>
          <TitleText>Selector de huellas (14468 elementos cargados)</TitleText>
          <FrameButton $w={42} aria-label="Cerrar selector"><Cross size={12} color="#000" /></FrameButton>
        </DialogTitle>
        <Chooser>
          <ChooserLeft>
            <SearchRow>
              <SearchBox>
                <svg width="27" height="18" viewBox="0 0 27 18"><circle cx="7" cy="7" r="5.500" fill="none" stroke="#666" strokeWidth="2.500" /><path d="M11 11l5 5" stroke="#666" strokeWidth="3" /><path d="M18 6h8l-4 4z" fill="#666" /></svg>
                <SearchInput aria-label="Buscar huella" value={query} onChange={(e) => setQuery(e.target.value)} />
                <Caret />
                <ClearButton aria-label="Borrar"><svg width="19" height="19" viewBox="0 0 19 19"><circle cx="9.500" cy="9.500" r="9.500" fill="#999" /><path d="M6 6l7 7M13 6l-7 7" stroke="#fff" strokeWidth="2.200" /></svg></ClearButton>
              </SearchBox>
              <SmallButton aria-label="Ordenar"><svg width="16" height="15" viewBox="0 0 16 15"><path d="M0 1h5M0 5h6M0 9h7M0 13h11" stroke={ink} strokeWidth="2" /><path d="M12 0v9M9 6l3 3 3-3" fill="none" stroke={ink} strokeWidth="1.800" /></svg></SmallButton>
            </SearchRow>
            <Filters>
              <CheckLabel $gap={4}><Check type="checkbox" />Apply footprint filters (R_*)</CheckLabel>
              <CheckLabel $gap={4}><Check type="checkbox" />Filter by pin count (2)</CheckLabel>
            </Filters>
            <ResultBox>
              <Results>
                <colgroup><Col $w={300} /><Col /></colgroup>
                <thead><tr><HeadCell>Elemento</HeadCell><HeadCell>Descripción</HeadCell></tr></thead>
                <tbody>
                  <ResultRow>
                    <ResultCell>
                      <Expander><svg width="11" height="8" viewBox="0 0 11 8"><path d="M1 1l4.500 5L10 1" fill="none" stroke="#333" strokeWidth="2" /></svg></Expander>
                      Resistor_THT
                    </ResultCell>
                    <ResultCell>Resistor footprints, through hole (THT)</ResultCell>
                  </ResultRow>
                  <ResultRow $on>
                    <ResultCell $indent={44}>R_Axial_DIN0207_....16mm_Horizontal</ResultCell>
                    <ResultCell>Resistor, Axial_DIN0207 series, Axial, Horiz....de/documents/datenblatt/B400/1_4W%23YAG.pdf</ResultCell>
                  </ResultRow>
                </tbody>
              </Results>
            </ResultBox>
          </ChooserLeft>
          <Preview><FootprintPreview /></Preview>
        </Chooser>
        <Details>
          <DetailsBody>
            <DetailsName>R_Axial_DIN0207_L6.3mm_D2.5mm_P10.16mm_Horizontal</DetailsName>
            <p>
              Resistor, Axial_DIN0207 series, Axial, Horizontal, pin pitch=10.16mm, 0.25W = 1/4W, length*diameter=6.3*2.5mm^2,{" "}
              <DetailsLink href="#datasheet">http://cdn-reichelt.de/documents/datenblatt/B400/1_4W%23YAG.pdf</DetailsLink>
            </p>
            <Rule />
            <Keywords><b>Palabras clave</b><span>Resistor Axial_DIN0207 series Axial Horizontal pin pitch 10.16mm 0.25W = 1/4W length 6.3mm diameter 2.5mm</span></Keywords>
          </DetailsBody>
          <ScrollTrack>
            <ScrollArrow aria-label="Subir"><svg width="10" height="7"><path d="M1 6l4-4 4 4" fill="none" stroke="#505050" strokeWidth="1.800" /></svg></ScrollArrow>
            <ScrollThumb />
            <ScrollArrow aria-label="Bajar"><svg width="10" height="7"><path d="M1 1l4 4 4-4" fill="none" stroke="#505050" strokeWidth="1.800" /></svg></ScrollArrow>
          </ScrollTrack>
        </Details>
        <DialogFooter>
          <FooterSep />
          <FlatButton aria-label="Vista 3D"><svg width="15" height="16" viewBox="0 0 15 16"><path d="M2 0h11v11H2z" fill="#333" /><path d="M3 11h9v2H3z" fill="#888" /><path d="M0 13h15v2H0z" fill={blue} /></svg></FlatButton>
          <SmallButton $on aria-label="Vista de huella"><svg width="18" height="18" viewBox="0 0 18 18"><path d="M1 3h16v12H1v-4l1-2-1-2z" fill="none" stroke={ink} /><path d="M3 1h3v4H3zM8 1h3v4H8zM13 1h3v4h-3zM3 13h3v4H3zM8 13h3v4H8zM13 13h3v4h-3z" fill={blue} /></svg></SmallButton>
          <FooterSep />
          <FooterCheck $gap={4}><Check type="checkbox" />Show 3D viewer in own window</FooterCheck>
          <DialogButton>Aceptar</DialogButton>
          <DialogButton>Cancelar</DialogButton>
        </DialogFooter>
      </Dialog>
    </Desktop>
  );
}
